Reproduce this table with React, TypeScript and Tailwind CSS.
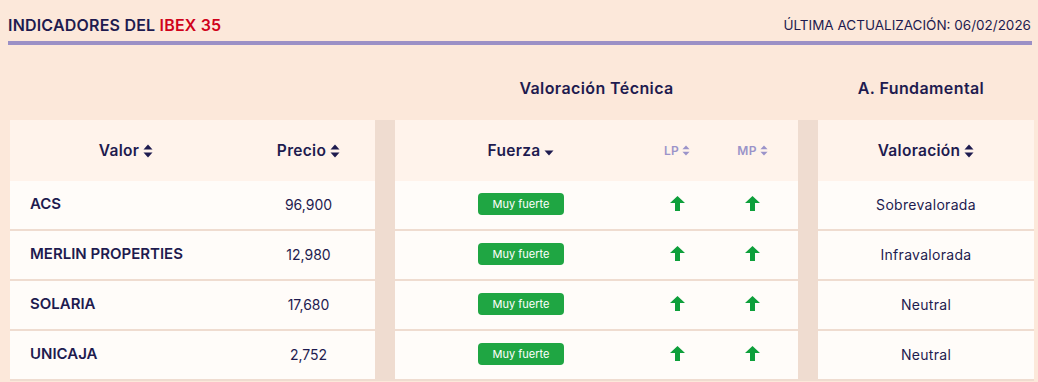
import React from 'react';

// Row data for the table
type Row = {
  name: string;
  price: string;
  strength: string;
  lp: 'up' | 'down';
  mp: 'up' | 'down';
  valuation: string;
};

const rows: Row[] = [
  { name: 'ACS', price: '96,900', strength: 'Muy fuerte', lp: 'up', mp: 'up', valuation: 'Sobrevalorada' },
  { name: 'MERLIN PROPERTIES', price: '12,980', strength: 'Muy fuerte', lp: 'up', mp: 'up', valuation: 'Infravalorada' },
  { name: 'SOLARIA', price: '17,680', strength: 'Muy fuerte', lp: 'up', mp: 'up', valuation: 'Neutral' },
  { name: 'UNICAJA', price: '2,752', strength: 'Muy fuerte', lp: 'up', mp: 'up', valuation: 'Neutral' },
];

const cols = 'grid grid-cols-[232px_133px_20px_252px_60px_91px_20px_216px]';

// Up/down sort icon
const SortIcon: React.FC<{ className?: string }> = ({ className }) => (
  <svg viewBox="0 0 10 14" className={className} fill="currentColor">
    <path d="M5 0.5 L9.5 5.5 H0.5 Z" />
    <path d="M5 13.5 L9.5 8.5 H0.5 Z" />
  </svg>
);

const CaretDown: React.FC<{ className?: string }> = ({ className }) => (
  <svg viewBox="0 0 10 6" className={className} fill="currentColor">
    <path d="M0.5 0.5 H9.5 L5 5.5 Z" />
  </svg>
);

const ArrowUp: React.FC = () => (
  <svg viewBox="0 0 15 15" className="w-[15px] h-[15px] text-[#0e9f3b]" fill="currentColor">
    <path d="M7.5 0 L15 7 H10 V15 H5 V7 H0 Z" />
  </svg>
);

const Spacer: React.FC = () => <div className="bg-[#efdcd0]" />;

const App: React.FC = () => {
  return (
    <div
      className="w-[1038px] h-[382px] overflow-hidden bg-[#fce8da] text-[#1e1b4f]"
      style={{ fontFamily: 'Inter, "Noto Sans", sans-serif' }}
    >
      {/* Title bar */}
      <div className="ml-2 mr-[6px] pt-[15px] pb-[6px] border-b-4 border-[#9b90c6] flex items-end justify-between">
        <h1 className="text-[16px] font-semibold leading-5 tracking-[0.2px]">
          INDICADORES DEL <span className="text-[#d0021b]">IBEX 35</span>
        </h1>
        <span className="text-[13.5px] leading-5 mr-[1px]">ÚLTIMA ACTUALIZACIÓN: 06/02/2026</span>
      </div>

      <div className="ml-[10px] w-[1024px]">
        {/* Group headers */}
        <div className={`${cols} h-[75px] items-end pb-[20px] text-[16px] font-semibold tracking-[0.4px]`}>
          <div className="col-span-3" />
          <div className="col-span-3 text-center">Valoración Técnica</div>
          <div />
          <div className="text-center pr-[10px]">A. Fundamental</div>
        </div>

        {/* Column headers */}
        <div className={`${cols} h-[61px] text-[15.5px] font-semibold tracking-[0.3px]`}>
          <div className="bg-[#fff3eb] flex items-center justify-center gap-1">
            Valor <SortIcon className="w-[10px] h-[14px]" />
          </div>
          <div className="bg-[#fff3eb] flex items-center justify-center gap-1">
            Precio <SortIcon className="w-[10px] h-[14px]" />
          </div>
          <Spacer />
          <div className="bg-[#fff3eb] flex items-center justify-center gap-1">
            Fuerza <CaretDown className="w-[10px] h-[6px] mt-[5px]" />
          </div>
          <div className="bg-[#fff3eb] flex items-center justify-center gap-[3px] text-[12px] text-[#9b93c9]">
            LP <SortIcon className="w-[8px] h-[11px]" />
          </div>
          <div className="bg-[#fff3eb] flex items-center justify-center gap-[3px] text-[12px] text-[#9b93c9]">
            MP <SortIcon className="w-[8px] h-[11px]" />
          </div>
          <Spacer />
          <div className="bg-[#fff3eb] flex items-center justify-center gap-1">
            Valoración <SortIcon className="w-[10px] h-[14px]" />
          </div>
        </div>

        {/* Rows */}
        {rows.map((row) => (
          <div key={row.name} className={`${cols} h-[50px] text-[14px]`}>
            <div className="bg-[#fffcf9] border-b-2 border-[#efdcd0] flex items-center pl-5 pb-[1px] text-[15px] font-semibold">
              {row.name}
            </div>
            <div className="bg-[#fffcf9] border-b-2 border-[#efdcd0] flex items-center justify-center pb-[1px]">
              {row.price}
            </div>
            <Spacer />
            <div className="bg-[#fffcf9] border-b-2 border-[#efdcd0] flex items-center justify-center pb-[2px]">
              <span className="w-[86px] h-[22px] rounded-[4px] bg-[#1fa643] text-white text-[11px] flex items-center justify-center">
                {row.strength}
              </span>
            </div>
            <div className="bg-[#fffcf9] border-b-2 border-[#efdcd0] flex items-center justify-center pb-[3px]">
              <ArrowUp />
            </div>
            <div className="bg-[#fffcf9] border-b-2 border-[#efdcd0] flex items-center justify-center pb-[3px]">
              <ArrowUp />
            </div>
            <Spacer />
            <div className="bg-[#fffcf9] border-b-2 border-[#efdcd0] flex items-center justify-center pb-[1px] tracking-[0.3px]">
              {row.valuation}
            </div>
          </div>
        ))}
      </div>
    </div>
  );
};

export default App;
